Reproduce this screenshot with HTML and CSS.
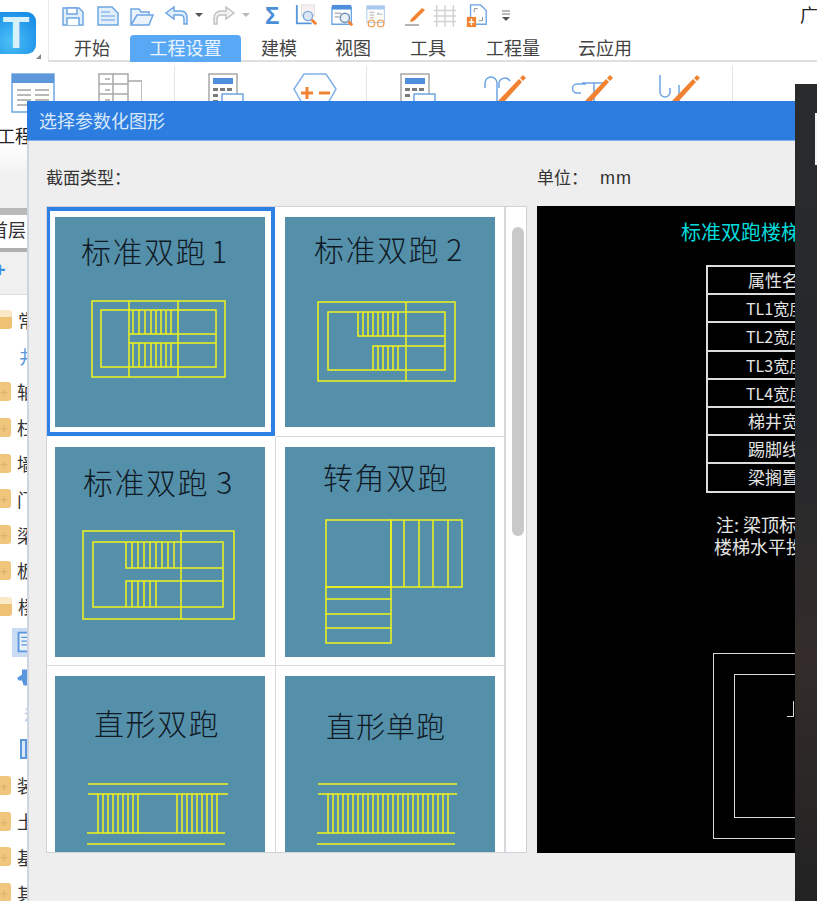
FILE: index.html
```html
<!DOCTYPE html>
<html lang="zh">
<head>
<meta charset="utf-8">
<title>选择参数化图形</title>
<link rel="stylesheet" href="styles.css">
</head>
<body>
<div class="app">
  <header class="top">
    <div class="logo-cell">
      <div class="logo">T</div>
      <i class="grip"></i>
    </div>
    <div class="top-main">
      <div class="quick">
        <svg class="qi" width="22" height="20" viewBox="0 0 22 20"><path d="M1 2h16l4 4v13H1z" fill="#e3eefb" stroke="#6ea6e4" stroke-width="1.5"/><path d="M5 2h10v6H5zM5 19v-7h12v7" fill="#fff" stroke="#6ea6e4" stroke-width="1.5"/></svg>
        <svg class="qi" width="22" height="20" viewBox="0 0 22 20"><path d="M1 1h14l6 6v12H1z" fill="#e3eefb" stroke="#6ea6e4" stroke-width="1.5"/><path d="M4 6h9M4 10h14M4 14h14" stroke="#8db9ea" stroke-width="1.5"/></svg>
        <svg class="qi" width="24" height="20" viewBox="0 0 24 20"><path d="M1 19V3h8l2 3h8v3H7L1 19h18l4-10H7" fill="#eaf2fc" stroke="#6ea6e4" stroke-width="1.5"/></svg>
        <svg class="qi" width="38" height="20" viewBox="0 0 38 20"><path d="M1 7l8-6v4h7c4 0 6 3 6 7v6h-3v-5c0-3-2-4-4-4H9v4z" fill="#e3eefb" stroke="#6ea6e4" stroke-width="1.5"/><path d="M30 7h8l-4 4z" fill="#555"/></svg>
        <svg class="qi" width="38" height="20" viewBox="0 0 38 20"><path d="M22 7l-8-6v4H9c-4 0-7 3-7 7v6h3v-5c0-3 2-4 4-4h5v4z" fill="#f1f1f1" stroke="#c2c2c2" stroke-width="1.5"/><path d="M30 7h8l-4 4z" fill="#bbb"/></svg>
        <span class="sigma">Σ</span>
        <svg class="qi" width="24" height="24" viewBox="0 0 24 26"><path d="M1 1v20h16" fill="none" stroke="#5b97dd" stroke-width="2"/><path d="M6 1h14v12H6z" fill="#f6f1ee" stroke="#ddd"/><circle cx="13" cy="13" r="5" fill="#dbe7f4" stroke="#7aa6d8" stroke-width="1.5"/><path d="M17 17l5 5" stroke="#f08232" stroke-width="3"/></svg>
        <svg class="qi" width="26" height="24" viewBox="0 0 26 26"><path d="M1 4h21v18H1z" fill="#fff" stroke="#6ea6e4" stroke-width="1.5"/><path d="M1 1h21v5H1z" fill="#4f8fdc"/><path d="M4 10h7M4 14h5" stroke="#888"/><circle cx="15" cy="15" r="5" fill="#e8f0f8" stroke="#6f8fae" stroke-width="1.5"/><path d="M19 19l4 4" stroke="#f08232" stroke-width="3"/></svg>
        <svg class="qi" width="24" height="24" viewBox="0 0 24 26"><path d="M1 2h19v18H1z" fill="#fff" stroke="#aac7ea"/><path d="M1 2h19v4H1z" fill="#a9c9ee"/><path d="M4 9h5M4 12h5M4 15h5M12 11h6M12 11l2-2" stroke="#a9a9a9"/><circle cx="6" cy="21" r="3.5" fill="none" stroke="#f0a35e" stroke-width="1.5"/><circle cx="16" cy="21" r="3.5" fill="none" stroke="#f0a35e" stroke-width="1.5"/></svg>
        <svg class="qi" width="24" height="22" viewBox="0 0 24 22"><path d="M2 20h14" stroke="#b5b5b5" stroke-width="2"/><path d="M8 14L19 3l3 2-11 11-4 1z" fill="#f08232"/></svg>
        <svg class="qi" width="24" height="24" viewBox="0 0 26 26"><path d="M4 1v24M13 1v24M22 1v24M1 7h24M1 13h24M1 19h24" stroke="#d2d2d2" stroke-width="1.5"/></svg>
        <svg class="qi" width="22" height="24" viewBox="0 0 22 26"><path d="M4 1h11l6 6v15H4z" fill="#fff" stroke="#6ea6e4" stroke-width="1.5"/><path d="M8 9V5h4M17 14v4h-4" fill="none" stroke="#8d8d8d"/><rect x="0" y="14" width="10" height="11" fill="#f08232"/><path d="M5 16v7M2 19.500h6" stroke="#fff" stroke-width="1.500"/></svg>
        <svg class="qi" width="10" height="12" viewBox="0 0 10 12"><path d="M1 1h8M1 4h8" stroke="#777"/><path d="M1 7h8l-4 4z" fill="#555"/></svg>
        <span class="cut-word">广</span>
      </div>
      <nav class="tabs">
        <span class="tab t-start">开始</span>
        <span class="tab tab-on">工程设置</span>
        <span class="tab t-build">建模</span>
        <span class="tab t-view">视图</span>
        <span class="tab t-tool">工具</span>
        <span class="tab t-qty">工程量</span>
        <span class="tab t-cloud">云应用</span>
      </nav>
    </div>
  </header>

  <section class="ribbon">
    <svg class="ri r1" width="44" height="40" viewBox="0 0 44 40"><path d="M1 1h42v38H1z" fill="#fff" stroke="#6ea6e4" stroke-width="1.5"/><path d="M1 1h42v9H1z" fill="#5f97dd"/><path d="M6 17h14M24 17h14M6 22h14M24 22h14M6 27h14M24 27h14M6 32h14" stroke="#a3a3a3" stroke-width="1.500"/></svg>
    <svg class="ri r2" width="44" height="40" viewBox="0 0 44 40"><path d="M1 1h29v38H1z" fill="#fff" stroke="#a8a8a8" stroke-width="1.500"/><path d="M30 8h14v32H30M1 11h29M1 21h29M1 31h29M15 1v38M7 6h5M7 17h5M7 27h5" fill="none" stroke="#a8a8a8" stroke-width="1.500"/></svg>
    <i class="rsep s1"></i>
    <svg class="ri r3" width="36" height="34" viewBox="0 0 36 34"><path d="M1 1h28v33H1z" fill="#fff" stroke="#a8a8a8" stroke-width="1.500"/><rect x="5" y="5" width="20" height="6" fill="#4f8fdc"/><path d="M5 15h5v3H5zM12 15h5v3h-5zM19 15h5v3h-5zM5 21h5v3H5zM5 27h5v3H5z" fill="#7b7b7b"/><path d="M14 21h21v13H14z" fill="#fff" stroke="#6ea6e4" stroke-width="1.500"/></svg>
    <svg class="ri r4" width="46" height="30" viewBox="0 0 46 30"><path d="M12 1h22l10 15-8 14H10L2 16z" fill="#fff" stroke="#7fb0e8" stroke-width="1.500"/><path d="M9 20h12M15 14v12M27 20h11" stroke="#f08232" stroke-width="3"/></svg>
    <i class="rsep s2"></i>
    <svg class="ri r5" width="36" height="34" viewBox="0 0 36 34"><path d="M1 1h28v33H1z" fill="#fff" stroke="#a8a8a8" stroke-width="1.500"/><rect x="5" y="5" width="20" height="6" fill="#4f8fdc"/><path d="M5 15h5v3H5zM12 15h5v3h-5zM19 15h5v3h-5zM5 21h5v3H5z" fill="#7b7b7b"/><path d="M14 21h21v13H14z" fill="#fff" stroke="#6ea6e4" stroke-width="1.500"/></svg>
    <svg class="ri r6" width="44" height="28" viewBox="0 0 44 28"><path d="M2 14V9a6 6 0 0 1 12 0v19M16 14V9a6 6 0 0 1 11-2" fill="none" stroke="#6ea6e4" stroke-width="1.500"/><path d="M14 28L36 5l3 3-18 20z" fill="#f08232"/><path d="M37 4l3-3 3 3-3 3z" fill="#f08232"/></svg>
    <svg class="ri r7" width="44" height="28" viewBox="0 0 44 28"><path d="M16 10H7a4 4 0 0 0 0 9h4M12 9h24M24 9v19" fill="none" stroke="#6ea6e4" stroke-width="1.500"/><path d="M14 28L36 5l3 3-18 20z" fill="#f08232"/><path d="M37 4l3-3 3 3-3 3z" fill="#f08232"/></svg>
    <svg class="ri r8" width="44" height="28" viewBox="0 0 44 28"><path d="M3 1v17a5 5 0 0 0 10 0v-4M22 11v17" fill="none" stroke="#6ea6e4" stroke-width="1.500"/><path d="M14 28L36 5l3 3-18 20z" fill="#f08232"/><path d="M37 4l3-3 3 3-3 3z" fill="#f08232"/></svg>
    <i class="rsep s3"></i>
    <span class="ribbon-label">工程</span>
  </section>

  <aside class="side">
    <div class="floor"><span>首层</span></div>
    <div class="side-tool"><span class="plus">+</span></div>
    <ul class="tree">
      <li class="row"><b class="folder open"></b><span>常</span></li>
      <li class="row leaf"><span class="leaf-ic">井</span></li>
      <li class="row"><b class="folder"></b><span>轴</span></li>
      <li class="row"><b class="folder"></b><span>柱</span></li>
      <li class="row"><b class="folder"></b><span>墙</span></li>
      <li class="row"><b class="folder"></b><span>门</span></li>
      <li class="row"><b class="folder"></b><span>梁</span></li>
      <li class="row"><b class="folder"></b><span>板</span></li>
      <li class="row"><b class="folder open"></b><span>楼</span></li>
      <li class="row sel"><svg width="16" height="31" viewBox="0 0 16 31"><rect width="16" height="31" fill="#c9dcf3"/><path d="M7 5h12v20H7z" fill="#e8f0fa" stroke="#5b97dd" stroke-width="2"/><path d="M10 10h6M10 14h6M10 18h6" stroke="#5b97dd" stroke-width="1.500"/></svg></li>
      <li class="row leaf wing"><svg width="12" height="19" viewBox="0 0 12 19"><path d="M0 10l6-4V0h6v19H8l-2-6H2z" fill="#5b97dd"/></svg></li>
      <li class="row leaf"><span class="leaf-ic small">汉</span></li>
      <li class="row leaf"><i class="mini"></i></li>
      <li class="row"><b class="folder"></b><span>装</span></li>
      <li class="row"><b class="folder"></b><span>土</span></li>
      <li class="row"><b class="folder"></b><span>基</span></li>
      <li class="row"><b class="folder"></b><span>其</span></li>
    </ul>
  </aside>
</div>

<div class="dialog">
  <div class="dlg-title">选择参数化图形</div>
  <div class="dlg-body">
    <div class="col-left">
      <div class="lbl">截面类型：</div>
      <div class="list">
        <div class="grid">
          <div class="cell on"><div class="thumb">
            <div class="cap c1">标准双跑 1</div>
            <svg class="plan" viewBox="0 0 210 210" width="210" height="210">
              <g class="y">
                <rect x="37" y="84" width="133" height="76"/><rect x="46" y="93" width="115" height="57"/>
                <path d="M74 84v76M123 84v76M74 117h87M74 126h87M78 93v24M84 93v24M90 93v24M96 93v24M101 93v24M106 93v24M111 93v24M116 93v24M78 126v24M84 126v24M90 126v24M96 126v24M101 126v24M106 126v24M111 126v24M116 126v24"/>
              </g>
            </svg>
          </div></div>
          <div class="cell"><div class="thumb">
            <div class="cap c2">标准双跑 2</div>
            <svg class="plan" viewBox="0 0 210 210" width="210" height="210">
              <g class="y">
                <rect x="33" y="85" width="137" height="79"/><rect x="43" y="95" width="117" height="58"/>
                <path d="M121 85v79M73 95v24h87M88 153v-24h72M78 95v24M83 95v24M88 95v24M93 95v24M98 95v24M103 95v24M108 95v24M113 95v24M93 129v24M98 129v24M103 129v24M108 129v24M113 129v24"/>
              </g>
            </svg>
          </div></div>
          <div class="cell"><div class="thumb">
            <div class="cap c3">标准双跑 3</div>
            <svg class="plan" viewBox="0 0 210 210" width="210" height="210">
              <g class="y">
                <rect x="28" y="84" width="151" height="88"/><rect x="38" y="95" width="130" height="65"/>
                <path d="M126 84v88M71 95v26h97M71 160v-26h97M77 95v26M83 95v26M89 95v26M95 95v26M101 95v26M107 95v26M113 95v26M119 95v26M77 134v26M83 134v26M89 134v26M95 134v26M101 134v26"/>
              </g>
            </svg>
          </div></div>
          <div class="cell"><div class="thumb">
            <div class="cap c4">转角双跑</div>
            <svg class="plan" viewBox="0 0 210 210" width="210" height="210">
              <g class="y">
                <rect x="41" y="73" width="65" height="67"/><rect x="106" y="73" width="71" height="67"/>
                <path d="M119 73v67M134 73v67M148 73v67M163 73v67M41 140h65v56H41zM41 152h65M41 167h65M41 181h65"/>
              </g>
            </svg>
          </div></div>
          <div class="cell"><div class="thumb">
            <div class="cap c5">直形双跑</div>
            <svg class="plan" viewBox="0 0 210 210" width="210" height="210">
              <g class="y">
                <path d="M33 108h140M33 118h140M32 157h138M32 168h138M43 118v39M48 118v39M53 118v39M58 118v39M63 118v39M68 118v39M73 118v39M78 118v39M83 118v39M122 118v39M127 118v39M132 118v39M137 118v39M142 118v39M147 118v39M152 118v39M157 118v39M162 118v39"/>
              </g>
            </svg>
          </div></div>
          <div class="cell"><div class="thumb">
            <div class="cap c6">直形单跑</div>
            <svg class="plan" viewBox="0 0 210 210" width="210" height="210">
              <g class="y">
                <path d="M33 108h139M33 118h139M32 157h138M32 168h138M43 118v39M48 118v39M53 118v39M58 118v39M63 118v39M68 118v39M73 118v39M78 118v39M83 118v39M88 118v39M93 118v39M98 118v39M103 118v39M108 118v39M113 118v39M118 118v39M123 118v39M128 118v39M133 118v39M138 118v39M143 118v39M148 118v39M153 118v39M158 118v39M163 118v39"/>
              </g>
            </svg>
          </div></div>
        </div>
        <div class="scroll"><i class="thumb-bar"></i></div>
      </div>
    </div>
    <div class="col-right">
      <div class="lbl unit"><span>单位：</span><span class="mm">mm</span></div>
      <div class="preview">
        <div class="pv-title">标准双跑楼梯</div>
        <table class="pv-table">
          <tr><td>属性名称</td></tr>
          <tr><td class="tl">TL1宽度</td></tr>
          <tr><td class="tl">TL2宽度</td></tr>
          <tr><td class="tl">TL3宽度</td></tr>
          <tr><td class="tl">TL4宽度</td></tr>
          <tr><td>梯井宽度</td></tr>
          <tr><td>踢脚线高</td></tr>
          <tr><td>梁搁置长</td></tr>
        </table>
        <div class="pv-note"><div class="first">注: 梁顶标高</div><div>楼梯水平投影</div></div>
        <div class="pv-plan"><div class="pv-inner"><span class="pv-mark"></span></div></div>
      </div>
    </div>
  </div>
</div>

<div class="dark"><i class="dark-white"></i></div>
</body>
</html>
```

FILE: styles.css
```css
* { box-sizing: border-box; }
html, body { margin: 0; padding: 0; }
body {
  width: 817px; height: 901px; overflow: hidden; position: relative;
  background: #fff;
  font-family: "Liberation Sans", "Noto Sans CJK SC", sans-serif;
  color: #333;
}
svg { display: block; }
ul { list-style: none; margin: 0; padding: 0; }

.app { width: 817px; height: 901px; }
.top { display: flex; height: 62px; }
.logo-cell { width: 48px; flex: none; padding-top: 12px; position: relative; }
.logo {
  width: 36px; height: 42px; border-radius: 0 9px 9px 0;
  background: radial-gradient(circle at 30% 70%, #4cc0f6, #1a8fe8 80%);
  color: #d8f2fc; font: bold 44px/42px "Liberation Sans", sans-serif; text-align: center;
  padding-right: 4px; overflow: hidden;
}
.grip { position: absolute; left: 36px; top: 54px; width: 0; height: 0; border-left: 5px solid transparent; border-bottom: 5px solid #888; }
.top-main { flex: 1; min-width: 0; border-bottom: 2px solid #dfdfdf; border-left: 1px solid #e8e8e8; }
.quick { height: 35px; display: flex; align-items: center; padding: 0 0 3px 13px; }
.qi { flex: none; }
.quick .qi:nth-child(1) { margin-right: 13px; }
.quick .qi:nth-child(2) { margin-right: 11px; }
.quick .qi:nth-child(3) { margin-right: 11px; }
.quick .qi:nth-child(4) { margin-right: 9px; }
.quick .qi:nth-child(5) { margin-right: 15px; }
.sigma { flex: none; color: #4a8fd8; font: bold 24px/24px "Liberation Sans", sans-serif; width: 15px; margin-right: 15px; }
.quick .qi:nth-child(7) { margin-right: 11px; }
.quick .qi:nth-child(8) { margin-right: 9px; }
.quick .qi:nth-child(9) { margin-right: 14px; }
.quick .qi:nth-child(10) { margin-right: 6px; }
.quick .qi:nth-child(11) { margin-right: 9px; }
.quick .qi:nth-child(12) { margin-right: 13px; }
.cut-word { flex: none; margin-left: auto; margin-right: -1px; font-size: 18px; line-height: 24px; color: #222; }

.tabs { display: flex; height: 27px; padding-left: 25px; font-size: 18px; color: #444; }
.tab { line-height: 29px; white-space: nowrap; }
.tab-on { width: 111px; margin-left: 20px; background: #58a8f5; color: #eaf5ff; border-radius: 4px 4px 0 0; text-align: center; }
.t-build { margin-left: 20px; }
.t-view { margin-left: 38px; }
.t-tool { margin-left: 39px; }
.t-qty { margin-left: 40px; }
.t-cloud { margin-left: 38px; }

.ribbon { height: 114px; position: relative; background: linear-gradient(#fff, #fff 70%, #f1f1f1); }
.ri { position: absolute; }
.r1 { left: 11px; top: 11px; }
.r2 { left: 98px; top: 11px; }
.r3 { left: 208px; top: 11px; }
.r4 { left: 292px; top: 11px; }
.r5 { left: 400px; top: 11px; }
.r6 { left: 483px; top: 12px; }
.r7 { left: 570px; top: 12px; }
.r8 { left: 657px; top: 12px; }
.rsep { position: absolute; top: 4px; width: 1px; height: 36px; background: #e4e4e4; }
.s1 { left: 174px; }
.s2 { left: 366px; }
.s3 { left: 732px; }
.ribbon-label { position: absolute; left: -3px; top: 62px; font-size: 18px; line-height: 26px; color: #222; }

.side { width: 27px; height: 725px; overflow: hidden; padding-top: 32px; background: linear-gradient(#f1f1f1 32px, #fff 32px); }
.floor { height: 44px; border-top: 7px solid #b9b9b9; border-bottom: 4px solid #b0b0b0; font-size: 18px; color: #333; background: #fff; white-space: nowrap; }
.floor span { display: block; margin-left: -10px; line-height: 33px; }
.side-tool { height: 43px; background: #f0f0f0; border-bottom: 1px solid #ddd; overflow: hidden; }
.plus { display: block; color: #3f8ee0; font: bold 20px/22px "Liberation Sans", sans-serif; margin-left: -6px; margin-top: 7px; }
.tree { padding-top: 7px; }
.row { height: 35.800px; display: flex; align-items: center; white-space: nowrap; font-size: 18px; color: #333; }
.folder {
  flex: none; display: block; position: relative; width: 11px; height: 19px;
  background: #efc67c; border-radius: 0 3px 3px 0; margin-right: 6px;
  color: #e0b56a; font: bold 13px/21px "Liberation Sans", sans-serif; text-align: left;
}
.folder::after { content: "+"; }
.folder.open { width: 12px; background: linear-gradient(#f9e9c6 35%, #eec274 35%); }
.folder.open::after { content: ""; }
.row.leaf { padding-left: 19px; }
.row.wing { padding-left: 17px; }
.leaf-ic { color: #5b97dd; font-size: 18px; }
.leaf-ic.small { font-size: 14px; margin-left: 5px; color: #8db9ea; }
.row.sel { padding-left: 12px; }
.mini { display: block; width: 12px; height: 20px; margin-left: 1px; border: 2px solid #5b97dd; background: #dbe8f7; }

.dialog {
  position: absolute; left: 27px; top: 101px; width: 790px; height: 800px;
  background: #eeeeee;
}
.dlg-title { height: 40px; background: #2d7de0; color: #d8e8fb; font-size: 18px; line-height: 42px; padding-left: 12px; border-bottom: 1px solid #7fb0ec; }
.dlg-body { display: flex; height: 760px; padding-left: 17px; border-left: 2px solid #cfd6e2; }
.col-left { width: 481px; flex: none; }
.lbl { height: 65px; padding-top: 28px; font-size: 17px; line-height: 20px; color: #333; }
.list { display: flex; width: 481px; height: 647px; background: #fff; border: 1px solid #cfd3d9; overflow: hidden; }
.grid { width: 458px; flex: none; display: grid; grid-template-columns: 229px 229px; grid-auto-rows: 229.500px; }
.cell { padding: 10px 0 0 9px; border-right: 1px solid #d6d8dc; border-bottom: 1px solid #d6d8dc; background: #fff; }
.cell:nth-child(2n+1) { padding-left: 8px; }
.cell.on { margin: 0 1px 1px -1px; padding: 6px 0 0 5px; border: 4px solid #2f80e4; }
.thumb { width: 210px; height: 210px; background: #5590aa; position: relative; overflow: hidden; }
.cap { position: absolute; font-family: "Noto Sans CJK SC", sans-serif; font-weight: 300; font-size: 30px; letter-spacing: 1.500px; line-height: 36px; color: #101a26; white-space: nowrap; }
.c1 { left: 26px; top: 15px; word-spacing: -4px; }
.c2 { left: 29px; top: 13px; word-spacing: -2px; }
.c3 { left: 28px; top: 16px; word-spacing: -1px; }
.c4 { left: 38px; top: 11px; }
.c5 { left: 39px; top: 28px; }
.c6 { left: 41px; top: 31px; font-size: 29px; letter-spacing: 1px; }
.plan { position: absolute; left: 0; top: 0; }
.y, .y * { fill: none; stroke: #f0f31c; stroke-width: 1.500; }

.scroll { flex: 1; border-left: 1px solid #d6d8dc; padding: 20px 0 0 6px; }
.thumb-bar { display: block; width: 12px; height: 309px; border-radius: 6px; background: #c9c9c9; }

.col-right { margin-left: 10px; flex: 1; }
.unit { padding-top: 27px; color: #333; }
.mm { margin-left: 12px; font-size: 18px; letter-spacing: 1px; }
.preview { width: 258px; height: 647px; background: #000; overflow: hidden; position: relative; color: #e4e4e4; font-family: "Noto Sans CJK SC", sans-serif; }
.pv-title { color: #00dcdc; font-size: 20px; line-height: 26px; margin: 13px 0 0 144px; white-space: nowrap; }
.pv-table { border-collapse: collapse; margin: 20px 0 0 169px; width: 130px; border: 2px solid #e2e2e2; }
.pv-table td { border: 2px solid #dcdcdc; height: 28.200px; padding: 0 0 0 40px; font-size: 17px; line-height: 24px; white-space: nowrap; text-align: left; }
.pv-table td.tl { padding-left: 38px; font-size: 16px; }
.pv-note { margin: 20px 0 0 177px; font-size: 18px; line-height: 22px; white-space: nowrap; }
.pv-note .first { padding-left: 2px; }
.pv-plan { position: absolute; left: 176px; top: 447px; width: 120px; height: 186px; border: 1.500px solid #d8d8d8; padding: 20px 0 0 20px; }
.pv-inner { width: 100px; height: 144px; border: 1.500px solid #d8d8d8; position: relative; }
.pv-mark { position: absolute; left: 52px; top: 26px; width: 7px; height: 16px; border-right: 1px solid #ddd; border-bottom: 1px solid #ddd; }

.dark { position: absolute; left: 795px; top: 84px; width: 22px; height: 817px; background: linear-gradient(#2a2b2c, #24282c 40%, #332c2a 70%, #222); padding: 29px 0 0 20px; }
.dark-white { display: block; width: 2px; height: 52px; background: #f5f5f5; }
```
